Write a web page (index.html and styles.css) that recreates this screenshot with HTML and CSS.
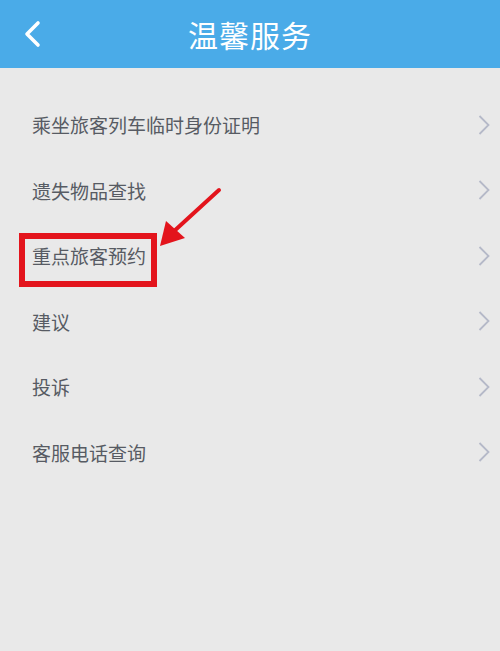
FILE: index.html
```html
<!DOCTYPE html>
<html lang="zh">
<head>
<meta charset="utf-8">
<link rel="stylesheet" href="styles.css">
</head>
<body>
<div class="app">
  <header class="bar">
    <svg class="back" viewBox="0 0 20 28" width="20" height="28"><path d="M16 3 L5 14 L16 25" fill="none" stroke="#fff" stroke-width="3.6" stroke-linecap="round" stroke-linejoin="round"/></svg>
    <h1 class="title">温馨服务</h1>
  </header>
  <ul class="list">
    <li class="row"><span class="label">乘坐旅客列车临时身份证明</span><svg class="chev" viewBox="0 0 12 20" width="12" height="20"><path d="M1.5 1 L10.5 10 L1.5 19" fill="none" stroke="#b5b9c8" stroke-width="1.8"/></svg></li>
    <li class="row"><span class="label">遗失物品查找</span><svg class="chev" viewBox="0 0 12 20" width="12" height="20"><path d="M1.5 1 L10.5 10 L1.5 19" fill="none" stroke="#b5b9c8" stroke-width="1.8"/></svg></li>
    <li class="row"><span class="label">重点旅客预约</span><svg class="chev" viewBox="0 0 12 20" width="12" height="20"><path d="M1.5 1 L10.5 10 L1.5 19" fill="none" stroke="#b5b9c8" stroke-width="1.8"/></svg></li>
    <li class="row"><span class="label">建议</span><svg class="chev" viewBox="0 0 12 20" width="12" height="20"><path d="M1.5 1 L10.5 10 L1.5 19" fill="none" stroke="#b5b9c8" stroke-width="1.8"/></svg></li>
    <li class="row"><span class="label">投诉</span><svg class="chev" viewBox="0 0 12 20" width="12" height="20"><path d="M1.5 1 L10.5 10 L1.5 19" fill="none" stroke="#b5b9c8" stroke-width="1.8"/></svg></li>
    <li class="row"><span class="label">客服电话查询</span><svg class="chev" viewBox="0 0 12 20" width="12" height="20"><path d="M1.5 1 L10.5 10 L1.5 19" fill="none" stroke="#b5b9c8" stroke-width="1.8"/></svg></li>
  </ul>
  <div class="highlight"></div>
  <svg class="arrow" viewBox="0 0 500 651" width="500" height="651">
    <line x1="219" y1="190" x2="172" y2="233" stroke="#e3141c" stroke-width="4" stroke-linecap="round"/>
    <polygon points="160,246 166,221 185,238" fill="#e3141c"/>
  </svg>
</div>
</body>
</html>
```
FILE: styles.css
```css
html, body {
  margin: 0;
  padding: 0;
}
body {
  width: 500px;
  height: 651px;
  overflow: hidden;
  background: #e9e9e9;
  font-family: "Noto Sans CJK SC", "Noto Sans", sans-serif;
}
.app {
  position: relative;
  width: 500px;
  height: 651px;
}
.bar {
  height: 68px;
  background: #4aabe8;
  display: flex;
  align-items: center;
  justify-content: center;
  position: relative;
}
.back {
  position: absolute;
  left: 22px;
  top: 20px;
}
.title {
  margin: 0;
  color: #ffffff;
  font-size: 30px;
  font-weight: 400;
  letter-spacing: 1px;
  line-height: 1;
}
.list {
  list-style: none;
  margin: 0;
  padding: 24px 0 0 0;
}
.row {
  height: 65.5px;
  display: flex;
  align-items: center;
  justify-content: space-between;
  padding: 0 10px 0 32px;
}
.label {
  font-size: 19px;
  color: #575b63;
  line-height: 1;
}
.chev {
  display: block;
}
.highlight {
  position: absolute;
  left: 19px;
  top: 233px;
  width: 126px;
  height: 42px;
  border: 6px solid #e3141c;
}
.arrow {
  position: absolute;
  left: 0;
  top: 0;
  pointer-events: none;
}
```
